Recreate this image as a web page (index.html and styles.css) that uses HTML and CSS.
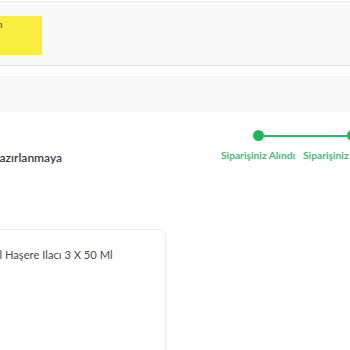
FILE: index.html
```html
<!DOCTYPE html>
<html lang="tr">
<head>
  <meta charset="UTF-8" />
  <title>Sipariş Detayı</title>
  <link rel="stylesheet" href="styles.css">
</head>
<body>

  <header class="topbar">
    <div class="logo"><span class="logo-text">n</span></div>
  </header>

  <div class="subbar"></div>

  <div class="status">
    <div class="status-title">Hazırlanmaya</div>

    <div class="stepper">
      <div class="track">
        <span class="dot"></span>
        <span class="line"></span>
        <span class="dot"></span>
      </div>
      <div class="labels">
        <span class="step-label">Siparişiniz Alındı</span>
        <span class="step-label">Siparişiniz Hazırlanıyor</span>
      </div>
    </div>
  </div>

  <div class="card">
    <p class="product-name">Jel Haşere Ilacı 3 X 50 Ml</p>
  </div>

</body>
</html>
```

FILE: styles.css
```css
* {
  box-sizing: border-box;
}

html, body {
  margin: 0;
  padding: 0;
  height: 100%;
  overflow: hidden;
}

body {
  font-family: Lato, "Noto Sans", sans-serif;
  background: #fff;
  color: #333;
}

/* Header */
.topbar {
  height: 65px;
  margin-top: 1px;
  border-top: 1px solid #ececec;
  border-bottom: 1px solid #e2e2e2;
  background: #f9f9f9;
  padding-top: 14px;
}

.logo {
  width: 42px;
  height: 39px;
  background: #f8ec3e;
  overflow: hidden;
}

.logo-text {
  display: block;
  margin-left: -3px;
  padding-top: 2px;
  font-size: 10px;
  font-weight: 700;
  color: #7d7415;
}

.subbar {
  height: 36px;
  margin-top: 10px;
  background: #f9f9f9;
}

/* Status */
.status {
  display: flex;
  align-items: flex-end;
  height: 56px;
  padding-top: 16px;
}

.status-title {
  flex-shrink: 0;
  width: 211px;
  padding-bottom: 3px;
  text-indent: -9.5px;
  font-size: 12px;
  font-weight: 600;
  color: #3a3a3a;
  white-space: nowrap;
  overflow: hidden;
}

.stepper {
  flex-shrink: 0;
  margin-bottom: 7px;
}

.track {
  display: flex;
  align-items: center;
  padding-left: 42px;
}

.dot {
  width: 11px;
  height: 11px;
  border-radius: 50%;
  background: #1fb75a;
  flex-shrink: 0;
}

.line {
  width: 83px;
  height: 2px;
  background: #2fb866;
  flex-shrink: 0;
}

.labels {
  display: flex;
  gap: 8px;
  margin-top: 8px;
  padding-left: 10px;
  white-space: nowrap;
}

.step-label {
  font-size: 10.2px;
  font-weight: 700;
  color: #4cb874;
}

/* Product card */
.card {
  width: 175px;
  height: 200px;
  margin-top: 61px;
  margin-left: -9px;
  border: 1px solid #ececec;
  border-radius: 7px;
  padding: 18px 0 0 0;
}

.product-name {
  margin: 0;
  text-indent: -3px;
  font-size: 11.2px;
  color: #4a4a4a;
  white-space: nowrap;
}
```
